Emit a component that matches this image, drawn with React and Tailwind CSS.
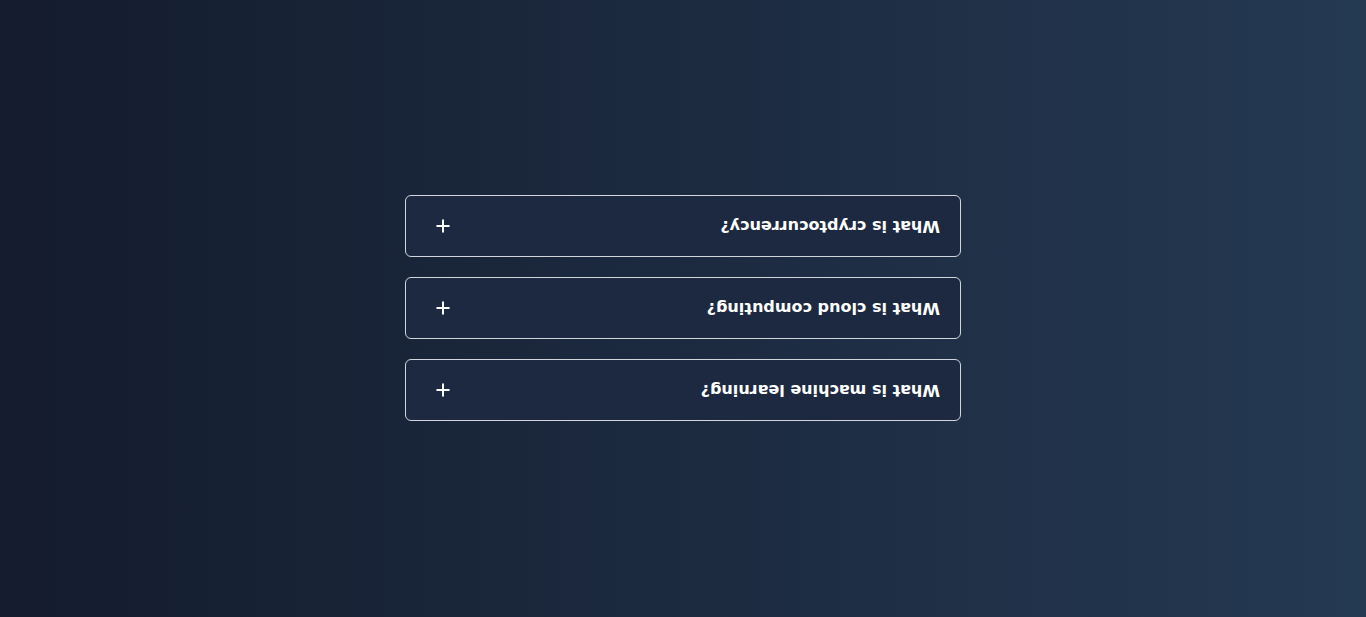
import { Plus } from 'lucide-react'

const faqs = [
  'What is machine learning?',
  'What is cloud computing?',
  'What is cryptocurrency?',
]

export default function App() {
  return (
    <div className="min-h-screen w-full flex items-center justify-center pb-px bg-gradient-to-r from-[#141c2e] to-[#243952]" style={{ fontFamily: '"DejaVu Sans", "Liberation Sans", sans-serif' }}>
      {/* list is shown upside down */}
      <div className="w-[556px] flex flex-col gap-5 rotate-180">
        {faqs.map(q => (
          <button
            key={q}
            className="h-[62px] w-full flex items-center justify-between pl-5 pr-[27px] bg-[#1c2940] border border-gray-300 rounded-md text-left"
          >
            <span className="text-white text-base font-semibold">{q}</span>
            <Plus size={20} strokeWidth={2.4} className="text-white" />
          </button>
        ))}
      </div>
    </div>
  )
}
